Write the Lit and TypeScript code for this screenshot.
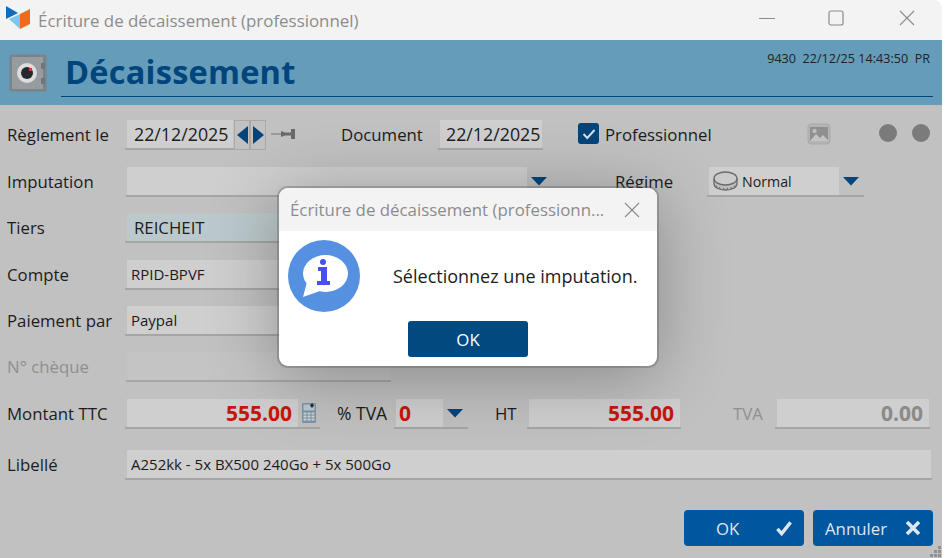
import { html, css, LitElement, svg } from "lit";
import { customElement } from "lit/decorators.js";

const arrowDown = svg`<svg class="drop" width="16" height="9" viewBox="0 0 16 9"><path d="M0 0h16L8 8.500z" fill="#00457c"/></svg>`;

@customElement("app-root")
export class AppRoot extends LitElement {
  override render() {
    return html`
      <div class="window">
        <div class="titlebar">
          <svg class="logo" width="26" height="26" viewBox="0 0 26 26">
            <path d="M0 1l12 7-12 6z" fill="#0f6cb8"/>
            <path d="M3 14l11-5v15z" fill="#7cc6f2"/>
            <path d="M14 9l10-5 0 15-10 5z" fill="#ef6c16"/>
          </svg>
          <span class="wintitle">Écriture de décaissement (professionnel)</span>
          <svg class="winbtn min" width="16" height="16" viewBox="0 0 16 16"><path d="M0 8.500h16" stroke="#8a8a8a"/></svg>
          <svg class="winbtn max" width="16" height="16" viewBox="0 0 16 16"><rect x="1" y="1" width="14" height="14" rx="2" fill="none" stroke="#8a8a8a" stroke-width="1.200"/></svg>
          <svg class="winbtn close" width="16" height="16" viewBox="0 0 16 16"><path d="M1 1l14 14M15 1L1 15" stroke="#8a8a8a" stroke-width="1.100"/></svg>
        </div>

        <div class="header">
          <svg class="safe" width="38" height="38" viewBox="0 0 38 38">
            <rect x="0.500" y="0.500" width="37" height="37" rx="2" fill="#7c8388"/>
            <rect x="3" y="3" width="31" height="32" fill="#969ca0"/>
            <rect x="32" y="9" width="4" height="6" fill="#6f767b"/>
            <rect x="32" y="24" width="4" height="6" fill="#6f767b"/>
            <circle cx="18" cy="19" r="10" fill="#dcdcdc"/>
            <circle cx="18" cy="19" r="6" fill="#23282c"/>
            <rect x="20" y="14" width="3" height="3" fill="#d8372a"/>
          </svg>
          <div class="heading">
            <h1>Décaissement</h1>
          </div>
          <div class="status">9430&nbsp; 22/12/25 14:43:50&nbsp; PR</div>
        </div>

        <div class="body">
          <div class="form">
            <div class="row">
              <span class="label">Règlement le</span>
              <div class="field date"><span>22/12/2025</span></div>
              <button class="step">
                <svg width="11" height="18" viewBox="0 0 11 18"><path d="M11 0v18L0 9z" fill="#00457c"/></svg>
              </button>
              <button class="step">
                <svg width="11" height="18" viewBox="0 0 11 18"><path d="M0 0v18L11 9z" fill="#00457c"/></svg>
              </button>
              <svg class="pin" width="24" height="10" viewBox="0 0 24 10">
                <path d="M0 5h11" stroke="#8a8a8a" stroke-width="1.400"/>
                <path d="M10 2l4 1.500h6V0h4v10h-4V6.500h-6L10 8z" fill="#6a6a6a"/>
              </svg>
              <span class="label doc">Document</span>
              <div class="field docdate"><span>22/12/2025</span></div>
              <span class="check">
                <svg width="14" height="12" viewBox="0 0 14 12"><path d="M1.500 6l3.800 4L12.500 2" fill="none" stroke="#d9dfe4" stroke-width="2"/></svg>
              </span>
              <span class="pro">Professionnel</span>
              <svg class="photo" width="24" height="22" viewBox="0 0 24 22">
                <rect x="1" y="1" width="22" height="20" rx="3" fill="#b4b4b4" stroke="#a9a9a9"/>
                <rect x="3" y="4" width="18" height="14" fill="#8f8f8f"/>
                <circle cx="7.500" cy="8" r="2.200" fill="#bdbdbd"/>
                <path d="M3 18l6-7 4 4 3-3 5 5v1z" fill="#c4c4c4"/>
              </svg>
              <span class="dot first"></span>
              <span class="dot"></span>
            </div>

            <div class="row">
              <span class="label">Imputation</span>
              <div class="combo impute">
                <div class="field"></div>
                ${arrowDown}
              </div>
              <span class="label regime">Régime</span>
              <div class="combo normal">
                <div class="field">
                  <svg width="25" height="20" viewBox="0 0 25 20">
                    <path d="M1 7.500v5C1 16.500 6 19 12.500 19S24 16.500 24 12.500v-5" fill="#bdbdbd" stroke="#6b6b6b" stroke-width="1.300"/>
                    <path d="M3 14.500l1 2M6.500 16l.7 2.200M10.500 16.800l.3 2M14.500 16.800l-.3 2M18.500 16l-.7 2.200M22 14.500l-1 2" stroke="#6b6b6b"/>
                    <ellipse cx="12.500" cy="7.500" rx="11.500" ry="6.500" fill="#cbcbcb" stroke="#6b6b6b" stroke-width="1.300"/>
                  </svg>
                  <span>Normal</span>
                </div>
                ${arrowDown}
              </div>
            </div>

            <div class="row">
              <span class="label">Tiers</span>
              <div class="field tiers"><span>REICHEIT</span></div>
            </div>

            <div class="row">
              <span class="label">Compte</span>
              <div class="field small wide"><span>RPID-BPVF</span></div>
            </div>

            <div class="row">
              <span class="label">Paiement par</span>
              <div class="field small wide"><span>Paypal</span></div>
            </div>

            <div class="row">
              <span class="label off">N° chèque</span>
              <div class="field cheque"></div>
            </div>

            <div class="row">
              <span class="label">Montant TTC</span>
              <div class="combo ttc">
                <div class="field amount"><span>555.00</span></div>
                <svg class="calc" width="14" height="20" viewBox="0 0 14 20">
                  <rect x="0" y="0" width="14" height="20" rx="1" fill="#7d95a8"/>
                  <rect x="1.500" y="1.500" width="11" height="6" fill="#bcc8d1"/>
                  <path d="M10 0l2 2.500-2 2.500-2-2.500z" fill="#1f2a33"/>
                  <path d="M1.500 10.500h11M1.500 13.500h11M1.500 16.500h11" stroke="#cfd4d8" stroke-width="2" stroke-dasharray="3 1"/>
                </svg>
              </div>
              <span class="label tva">% TVA</span>
              <div class="combo zero">
                <div class="field amount left"><span>0</span></div>
                ${arrowDown}
              </div>
              <span class="label ht">HT</span>
              <div class="field amount htv"><span>555.00</span></div>
              <span class="label off tvalabel">TVA</span>
              <div class="field amount grey tvav"><span>0.00</span></div>
            </div>

            <div class="row">
              <span class="label">Libellé</span>
              <div class="field small libelle"><span>A252kk - 5x BX500 240Go + 5x 500Go</span></div>
            </div>
          </div>

          <div class="actions">
            <button class="action ok">
              <span>OK</span>
              <svg width="16" height="16" viewBox="0 0 17 16"><path d="M1.500 9l4.500 5L15.500 2" fill="none" stroke="#dfe6ec" stroke-width="3.600"/></svg>
            </button>
            <button class="action cancel">
              <span>Annuler</span>
              <svg width="16" height="16" viewBox="0 0 16 16"><path d="M2 2l12 12M14 2L2 14" stroke="#dfe6ec" stroke-width="3.600"/></svg>
            </button>
          </div>
          <svg class="grip" width="12" height="12" viewBox="0 0 12 12" fill="#8f8f8f">
            <rect x="8" y="0" width="3" height="3"/><rect x="4" y="4" width="3" height="3"/><rect x="8" y="4" width="3" height="3"/>
            <rect x="0" y="8" width="3" height="3"/><rect x="4" y="8" width="3" height="3"/><rect x="8" y="8" width="3" height="3"/>
          </svg>
        </div>

        <div class="dialog">
          <div class="dialog-title">
            <span>Écriture de décaissement (professionn...</span>
            <svg width="16" height="16" viewBox="0 0 16 16"><path d="M1 1l14 14M15 1L1 15" stroke="#8a8a8a" stroke-width="1.100"/></svg>
          </div>
          <div class="dialog-main">
            <svg class="info" width="72" height="72" viewBox="0 0 72 72">
              <circle cx="36" cy="36" r="36" fill="#5591e0"/>
              <ellipse cx="37.500" cy="33.500" rx="22.500" ry="18.500" fill="#fff"/>
              <path d="M19 42l-4 15 17-6z" fill="#fff"/>
              <circle cx="35" cy="22" r="3" fill="#4a50f0"/>
              <path d="M30 27h9v14h3v4H29v-4h4V31h-3z" fill="#4a50f0"/>
            </svg>
            <span class="message">Sélectionnez une imputation.</span>
          </div>
          <div class="dialog-foot"><button>OK</button></div>
        </div>
      </div>
    `;
  }

  static styles = css`
    :host {
      display: block;
      width: 945px;
      height: 558px;
      font-family: "Open Sans", "Noto Sans", sans-serif;
      color: #1c1c1c;
      background: #fff;
    }
    .window {
      position: relative;
      width: 942px;
      height: 558px;
      overflow: hidden;
      border-top-right-radius: 8px;
      display: flex;
      flex-direction: column;
    }
    .titlebar {
      height: 40px;
      background: #f3f3f3;
      display: flex;
      align-items: center;
      padding-left: 6px;
      flex: none;
    }
    .logo { margin-top: -4px; }
    .wintitle {
      margin-left: 6px;
      font-size: 16.900px;
      color: #8c8c8c;
      flex: 1;
    }
    .winbtn { flex: none; margin-top: -4px; }
    .min { margin-right: 53px; }
    .max { margin-right: 55px; }
    .close { margin-right: 27px; }

    .header {
      position: relative;
      height: 65px;
      background: #659cba;
      display: flex;
      flex: none;
      padding: 14px 8px 0 9px;
      box-sizing: border-box;
    }
    .safe { flex: none; }
    .heading {
      position: absolute;
      left: 61px;
      right: 9px;
      top: 0;
      height: 56px;
      border-bottom: 1px solid #00457c;
    }
    h1 {
      margin: 9px 0 0 4px;
      font-size: 32.600px;
      line-height: 46px;
      font-weight: 700;
      color: #00457c;
      letter-spacing: 0.2px;
    }
    .status {
      position: absolute;
      right: 12px;
      top: 10px;
      font-size: 12.600px;
      color: #222;
      white-space: pre;
    }

    .body {
      position: relative;
      flex: 1;
      background: #c1c1c1;
    }
    .form {
      display: grid;
      grid-template-rows: 47px 46px 47px 46px 46px 47px 51px 30px;
      padding: 15px 0 0 7px;
    }
    .row {
      display: flex;
      align-items: flex-start;
      font-size: 16.800px;
      height: 30px;
    }
    .label {
      width: 120px;
      flex: none;
      line-height: 29px;
      white-space: nowrap;
    }
    .off { color: #8f8f8f; }
    .field {
      position: relative;
      box-sizing: border-box;
      height: 30px;
      background: #cfcfcf;
      padding: 0 7px 2px;
      flex: none;
      white-space: nowrap;
      display: flex;
      align-items: center;
    }
    .field::after {
      content: "";
      position: absolute;
      left: -2px;
      right: -1px;
      bottom: 0;
      height: 2px;
      background: #a6a6a6;
    }
    .field.small { font-size: 15px; padding: 0 4px 2px; }
    .date { width: 106px; font-size: 17.800px; }
    .step {
      width: 16px;
      height: 30px;
      flex: none;
      padding: 0;
      background: none;
      border: 1px solid #a9a9a9;
      display: flex;
      align-items: center;
      justify-content: center;
    }
    .step:first-of-type { margin-left: 1px; }
    .pin { margin: 9px 0 0 5px; flex: none; }
    .doc { width: 99px; margin-left: 46px; }
    .docdate { width: 102px; padding: 0 6px 2px; font-size: 17.800px; }
    .check {
      width: 21px;
      height: 21px;
      margin: 3px 0 0 36px;
      background: #00457c;
      border-radius: 3px;
      display: flex;
      align-items: center;
      justify-content: center;
      flex: none;
    }
    .pro { margin-left: 6px; line-height: 29px; width: 202px; flex: none; }
    .photo { margin-top: 3px; flex: none; }
    .dot {
      width: 18px;
      height: 18px;
      border-radius: 50%;
      background: #7b7b7b;
      margin: 4px 0 0 15px;
      flex: none;
    }
    .dot.first { margin-left: 48px; }

    .combo {
      display: flex;
      align-items: flex-start;
      height: 30px;
      box-sizing: border-box;
      border-bottom: 2px solid #a6a6a6;
      flex: none;
    }
    .combo .field { height: 28px; padding-bottom: 0; }
    .combo .field::after { display: none; }
    .drop { margin: 10px 0 0 4px; flex: none; }
    .impute { width: 427px; margin-left: -1px; padding-left: 1px; }
    .impute .field { width: 400px; }
    .regime { width: 92px; margin-left: 62px; }
    .normal { width: 157px; padding-left: 2px; }
    .normal .field {
      width: 130px;
      font-size: 14.200px;
      padding: 0 0 0 4px;
      gap: 4px;
    }
    .tiers { width: 200px; background: #bcc9cc; }
    .wide { width: 200px; }
    .cheque { width: 264px; background: #c4c4c4; }
    .cheque::after { left: -1px; right: 0; }

    .amount {
      justify-content: flex-end;
      color: #c8160a;
      font-weight: 700;
      font-size: 21px;
    }
    .amount.left { justify-content: flex-start; padding: 0 3px; }
    .amount.grey { color: #8a8a8a; }
    .ttc { width: 195px; margin-left: -2px; padding-left: 2px; }
    .ttc .field { width: 171px; padding-right: 6px; }
    .calc { margin: 4px 0 0 4px; flex: none; }
    .tva { width: 59px; margin-left: 17px; font-size: 17.500px; }
    .zero { width: 74px; padding-left: 2px; margin-left: -2px; }
    .zero .field { width: 47px; }
    .zero .drop { margin-left: 4px; }
    .ht { width: 34px; margin-left: 27px; }
    .htv { width: 151px; padding-right: 6px; }
    .tvalabel { width: 44px; margin-left: 53px; }
    .tvav { width: 152px; padding-right: 6px; }
    .libelle { width: 804px; }

    .actions {
      position: absolute;
      right: 9px;
      top: 405px;
      display: flex;
      gap: 9px;
    }
    .action {
      width: 120px;
      height: 36px;
      background: #00579f;
      border: none;
      border-radius: 4px;
      color: #dfe6ec;
      font: inherit;
      font-size: 16.800px;
      display: flex;
      align-items: center;
      padding: 0 12px;
      box-sizing: border-box;
    }
    .ok span { margin-left: 20px; flex: 1; text-align: left; }
    .cancel span { flex: 1; text-align: left; }
    .grip { position: absolute; right: 0; bottom: 0; }

    .dialog {
      position: absolute;
      left: 279px;
      top: 188px;
      width: 378px;
      height: 178px;
      border-radius: 9px;
      background: #fff;
      box-shadow: 0 0 0 2px rgba(90, 90, 90, 0.35), 0 10px 70px rgba(0, 0, 0, 0.3);
      overflow: hidden;
      display: flex;
      flex-direction: column;
    }
    .dialog-title {
      height: 43px;
      background: #f3f3f3;
      display: flex;
      align-items: center;
      justify-content: space-between;
      padding: 0 17px 0 11px;
      font-size: 16.850px;
      color: #8c8c8c;
      flex: none;
    }
    .dialog-main {
      display: flex;
      align-items: center;
      height: 72px;
      margin-top: 9px;
      padding-left: 9px;
      flex: none;
    }
    .message {
      margin-left: 33px;
      font-size: 18px;
      color: #1c1c1c;
    }
    .dialog-foot { display: flex; justify-content: center; margin-top: 9px; }
    .dialog-foot button {
      width: 120px;
      height: 36px;
      background: #004a80;
      border: none;
      border-radius: 3px;
      color: #fff;
      font: inherit;
      font-size: 16.800px;
    }
  `;
}
